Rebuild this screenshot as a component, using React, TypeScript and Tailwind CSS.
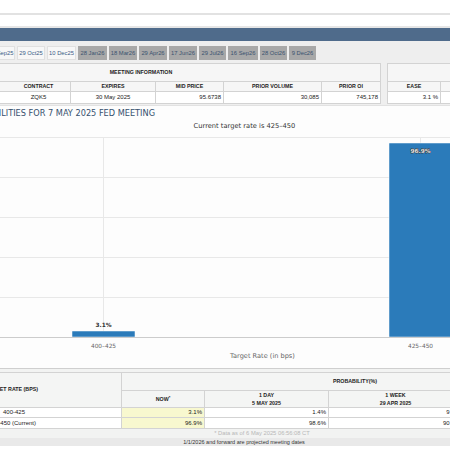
import React from "react";

const tabs = [
  { t: "29 Sep25", c: "w-[28px] bg-[#f7f7f7] text-[#3b5c86] border border-[#e0e0e0]" },
  { t: "29 Oct25", c: "w-[28px] bg-[#f7f7f7] text-[#3b5c86] border border-[#e0e0e0]" },
  { t: "10 Dec25", c: "w-[29px] bg-[#f7f7f7] text-[#3b5c86] border border-[#e0e0e0]" },
  { t: "28 Jan26", c: "w-[29px] bg-[#a8a8a8] text-[#3a526f]" },
  { t: "18 Mar26", c: "w-[28px] bg-[#a8a8a8] text-[#3a526f]" },
  { t: "29 Apr26", c: "w-[28px] bg-[#a8a8a8] text-[#3a526f]" },
  { t: "17 Jun26", c: "w-[28px] bg-[#a8a8a8] text-[#3a526f]" },
  { t: "29 Jul26", c: "w-[27px] bg-[#a8a8a8] text-[#3a526f]" },
  { t: "16 Sep26", c: "w-[30px] bg-[#a8a8a8] text-[#3a526f]" },
  { t: "28 Oct26", c: "w-[27px] bg-[#a8a8a8] text-[#3a526f]" },
  { t: "9 Dec26", c: "w-[27px] bg-[#a8a8a8] text-[#3a526f]" },
];

export default function App() {
  return (
    <div className="w-[450px] h-[450px] overflow-hidden bg-white font-['Liberation_Sans',Arial,sans-serif] text-[#222]">
      {/* top header */}
      <div className="h-[13px] bg-white" />
      <div className="h-[2px] bg-[#e2e2e2]" />
      <div className="h-[11px] bg-white" />
      <div className="h-[2px] bg-[#e6e6e6]" />
      <div className="h-[13px] bg-[#4f6b8b]" />
      {/* tabs */}
      <div className="h-[19px] bg-[#eeeeee] flex items-end gap-[2px] ml-[-13px] w-[480px]">
        {tabs.map((tab) => (
          <div
            key={tab.t}
            className={`h-[14px] shrink-0 flex items-center justify-center text-[5.8px] whitespace-nowrap ${tab.c}`}
          >
            {tab.t}
          </div>
        ))}
      </div>
      {/* meeting info tables */}
      <div className="h-[46px] bg-[#efefef] pt-[3px] flex gap-[6px] border-b border-[#e2e2e2]">
        <div className="ml-[-99px] w-[480px] shrink-0 border border-[#d3d3d3] bg-white h-[41px] flex flex-col">
          <div className="h-[18px] bg-[#f6f6f6] border-b border-[#d3d3d3] flex items-center justify-center text-[5.3px] font-bold">
            MEETING INFORMATION
          </div>
          <div className="h-[10px] bg-[#f6f6f6] border-b border-[#d3d3d3] flex text-[5.3px] font-bold">
            <div className="w-[169px] border-r border-[#d3d3d3] flex items-center pl-[105px]">
              <span className="w-[64px] text-center">CONTRACT</span>
            </div>
            <div className="w-[85px] border-r border-[#d3d3d3] flex items-center justify-center">EXPIRES</div>
            <div className="w-[68px] border-r border-[#d3d3d3] flex items-center justify-center">MID PRICE</div>
            <div className="w-[98px] border-r border-[#d3d3d3] flex items-center justify-center">PRIOR VOLUME</div>
            <div className="flex-1 flex items-center justify-center">PRIOR OI</div>
          </div>
          <div className="flex-1 flex text-[6px]">
            <div className="w-[169px] border-r border-[#d3d3d3] flex items-center pl-[105px]">
              <span className="w-[64px] text-center">ZQK5</span>
            </div>
            <div className="w-[85px] border-r border-[#d3d3d3] flex items-center justify-center">30 May 2025</div>
            <div className="w-[68px] border-r border-[#d3d3d3] flex items-center justify-end pr-[2px]">95.6738</div>
            <div className="w-[98px] border-r border-[#d3d3d3] flex items-center justify-end pr-[2px]">30,085</div>
            <div className="flex-1 flex items-center justify-end pr-[2px]">745,178</div>
          </div>
        </div>
        <div className="w-[120px] shrink-0 border border-[#d3d3d3] bg-white h-[41px] flex flex-col">
          <div className="h-[18px] bg-[#f6f6f6] border-b border-[#d3d3d3]" />
          <div className="h-[10px] bg-[#f6f6f6] border-b border-[#d3d3d3] flex text-[5.3px] font-bold">
            <div className="w-[53px] border-r border-[#d3d3d3] flex items-center justify-center">EASE</div>
            <div className="flex-1" />
          </div>
          <div className="flex-1 flex text-[6px]">
            <div className="w-[53px] border-r border-[#d3d3d3] flex items-center justify-end pr-[2px]">3.1 %</div>
            <div className="flex-1" />
          </div>
        </div>
      </div>
      {/* chart section */}
      <div className="bg-[#fdfdfd] border-b border-[#cfcfcf] h-[263px] flex flex-col font-['DejaVu_Sans',sans-serif]">
        <div className="h-[13px] mt-[1px] w-[155px] flex justify-end items-center whitespace-nowrap text-[8.2px] text-[#36506e]">
          TARGET RATE PROBABILITIES FOR 7 MAY 2025 FED MEETING
        </div>
        <div className="h-[12px] w-[489px] flex justify-center items-center whitespace-nowrap text-[6.7px] text-[#333]">
          Current target rate is 425–450
        </div>
        <svg width="450" height="236" viewBox="0 0 450 236" className="block">
          {[5, 45, 85, 125, 165].map((y) => (
            <line key={y} x1="0" x2="450" y1={y + 0.5} y2={y + 0.5} stroke="#e8e8e8" strokeWidth="1" />
          ))}
          <line x1="103.5" x2="103.5" y1="5" y2="205" stroke="#e8e8e8" strokeWidth="1" />
          <line x1="420.5" x2="420.5" y1="5" y2="205" stroke="#e8e8e8" strokeWidth="1" />
          <rect x="72" y="199" width="63" height="6" fill="#2b7bba" stroke="#fff" strokeWidth="0.5" />
          <rect x="389" y="11" width="64" height="194" fill="#2b7bba" stroke="#fff" strokeWidth="0.5" />
          <line x1="0" x2="450" y1="205.5" y2="205.5" stroke="#cccccc" strokeWidth="1" />
          <text x="103.5" y="194.5" textAnchor="middle" fontSize="5.8" fontWeight="bold" fill="#333">3.1%</text>
          <text x="420.5" y="20.5" textAnchor="middle" fontSize="5.8" fontWeight="bold" fill="#e4e4e4" stroke="#333" strokeWidth="0.8" paintOrder="stroke">96.9%</text>
          <text x="103.5" y="215.5" textAnchor="middle" fontSize="5.8" fill="#666">400–425</text>
          <text x="420.5" y="215.5" textAnchor="middle" fontSize="5.8" fill="#666">425–450</text>
          <text x="262.5" y="225.5" textAnchor="middle" fontSize="6.6" fill="#666">Target Rate (in bps)</text>
        </svg>
      </div>
      {/* probability table */}
      <div className="bg-[#f2f3f2] h-[72px] pt-[3px] flex flex-col">
        <div className="flex ml-[-20px] w-[608px] border-t border-[#d3d3d3]">
          <div className="w-[142px] shrink-0 flex flex-col border-r border-[#d3d3d3]">
            <div className="h-[35px] bg-[#f4f5f4] border-b border-[#d3d3d3] flex items-center">
              <span className="w-[58px] flex justify-end whitespace-nowrap text-[5.3px] font-bold">TARGET RATE (BPS)</span>
            </div>
            <div className="h-[10px] bg-white border-b border-[#d3d3d3] flex items-center pl-[23px] text-[6px]">400-425</div>
            <div className="h-[11px] bg-white border-b border-[#d3d3d3] flex items-center text-[6px]">
              <span className="w-[56px] flex justify-end whitespace-nowrap">425-450 (Current)</span>
            </div>
          </div>
          <div className="flex-1 flex flex-col">
            <div className="h-[18px] bg-[#f4f5f4] border-b border-[#d3d3d3] w-[466px] flex items-center justify-center text-[5.3px] font-bold">
              PROBABILITY(%)
            </div>
            <div className="flex h-[17px] bg-[#f4f5f4] border-b border-[#d3d3d3] text-[5.3px] font-bold leading-[8px]">
              <div className="w-[83px] border-r border-[#d3d3d3] flex items-center justify-center">
                NOW<sup className="text-[4px] relative top-[-1px]">*</sup>
              </div>
              <div className="w-[124px] border-r border-[#d3d3d3] flex flex-col items-center justify-center">
                <span>1 DAY</span>
                <span>5 MAY 2025</span>
              </div>
              <div className="w-[134px] border-r border-[#d3d3d3] flex flex-col items-center justify-center">
                <span>1 WEEK</span>
                <span>29 APR 2025</span>
              </div>
              <div className="flex-1" />
            </div>
            <div className="flex h-[10px] border-b border-[#d3d3d3] text-[6px]">
              <div className="w-[83px] bg-[#f8f8cf] border-r border-[#d3d3d3] flex items-center justify-end pr-[2px]">3.1%</div>
              <div className="w-[124px] bg-white border-r border-[#d3d3d3] flex items-center justify-end pr-[2px]">1.4%</div>
              <div className="w-[134px] bg-white border-r border-[#d3d3d3] flex items-center justify-end pr-[2px]">9.8%</div>
              <div className="flex-1 bg-white" />
            </div>
            <div className="flex h-[11px] border-b border-[#d3d3d3] text-[6px]">
              <div className="w-[83px] bg-[#f8f8cf] border-r border-[#d3d3d3] flex items-center justify-end pr-[2px]">96.9%</div>
              <div className="w-[124px] bg-white border-r border-[#d3d3d3] flex items-center justify-end pr-[2px]">98.6%</div>
              <div className="w-[134px] bg-white border-r border-[#d3d3d3] flex items-center justify-end pr-[2px]">90.2%</div>
              <div className="flex-1 bg-white" />
            </div>
          </div>
        </div>
        <div className="h-[11px] w-[524px] flex items-center justify-center text-[5.8px] text-[#b8b8b8] whitespace-nowrap">
          * Data as of 6 May 2025 06:56:08 CT
        </div>
        <div className="h-[2px] bg-[#dcdcdc]" />
        <div className="flex-1 bg-[#e9e9e9] w-[488px] flex items-center justify-center text-[5.5px] text-[#333] whitespace-nowrap">
          1/1/2026 and forward are projected meeting dates
        </div>
      </div>
    </div>
  );
}
